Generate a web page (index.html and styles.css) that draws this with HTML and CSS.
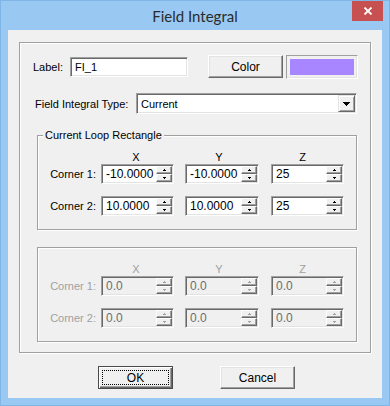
FILE: index.html
```html
<!DOCTYPE html>
<html lang="en">
<head>
  <meta charset="UTF-8">
  <meta name="viewport" content="width=device-width, initial-scale=1.0">
  <title>Field Integral</title>
  <link rel="stylesheet" href="styles.css">
</head>
<body>
  <div class="window">
    <div class="titlebar">
      <span></span>
      <span class="title">Field Integral</span>
      <div class="close">
        <svg width="10" height="8" viewBox="0 0 10 8"><path d="M1.5 0.5 L8.5 7.5 M8.5 0.5 L1.5 7.5" stroke="#fff" stroke-width="1.8" fill="none"/></svg>
      </div>
    </div>

    <div class="client">
      <div class="frame">
        <div class="row row-label">
          <span class="lbl lbl-label">Label:</span>
          <div class="edit edit-label">FI_1</div>
          <div class="button btn-color">Color</div>
          <div class="swatch"><div class="swatch-fill"></div></div>
        </div>

        <div class="row row-type">
          <span class="lbl lbl-type">Field Integral Type:</span>
          <div class="combo">
            <span class="combo-text">Current</span>
            <div class="combo-btn">
              <svg width="7" height="4" viewBox="0 0 7 4"><path d="M0 0h7v1H0zM1 1h5v1H1zM2 2h3v1H2zM3 3h1v1H3z" fill="#000"/></svg>
            </div>
          </div>
        </div>

        <div class="group">
          <span class="group-title">Current Loop Rectangle</span>
          <div class="coords-row hdr-row">
            <span class="corner-lbl"></span>
            <span class="hdr c1">X</span>
            <span class="hdr c2">Y</span>
            <span class="hdr c3">Z</span>
          </div>
          <div class="coords-row">
            <span class="corner-lbl">Corner 1:</span>
            <div class="spin c1"><span class="spin-text">-10.0000</span><span class="spin-btns"><span class="spin-up"><svg width="3" height="2" viewBox="0 0 3 2"><path d="M1 0h1v1H1zM0 1h3v1H0z"/></svg></span><span class="spin-down"><svg width="3" height="2" viewBox="0 0 3 2"><path d="M0 0h3v1H0zM1 1h1v1H1z"/></svg></span></span></div>
            <div class="spin c2"><span class="spin-text">-10.0000</span><span class="spin-btns"><span class="spin-up"><svg width="3" height="2" viewBox="0 0 3 2"><path d="M1 0h1v1H1zM0 1h3v1H0z"/></svg></span><span class="spin-down"><svg width="3" height="2" viewBox="0 0 3 2"><path d="M0 0h3v1H0zM1 1h1v1H1z"/></svg></span></span></div>
            <div class="spin c3"><span class="spin-text">25</span><span class="spin-btns"><span class="spin-up"><svg width="3" height="2" viewBox="0 0 3 2"><path d="M1 0h1v1H1zM0 1h3v1H0z"/></svg></span><span class="spin-down"><svg width="3" height="2" viewBox="0 0 3 2"><path d="M0 0h3v1H0zM1 1h1v1H1z"/></svg></span></span></div>
          </div>
          <div class="coords-row second">
            <span class="corner-lbl">Corner 2:</span>
            <div class="spin c1"><span class="spin-text">10.0000</span><span class="spin-btns"><span class="spin-up"><svg width="3" height="2" viewBox="0 0 3 2"><path d="M1 0h1v1H1zM0 1h3v1H0z"/></svg></span><span class="spin-down"><svg width="3" height="2" viewBox="0 0 3 2"><path d="M0 0h3v1H0zM1 1h1v1H1z"/></svg></span></span></div>
            <div class="spin c2"><span class="spin-text">10.0000</span><span class="spin-btns"><span class="spin-up"><svg width="3" height="2" viewBox="0 0 3 2"><path d="M1 0h1v1H1zM0 1h3v1H0z"/></svg></span><span class="spin-down"><svg width="3" height="2" viewBox="0 0 3 2"><path d="M0 0h3v1H0zM1 1h1v1H1z"/></svg></span></span></div>
            <div class="spin c3"><span class="spin-text">25</span><span class="spin-btns"><span class="spin-up"><svg width="3" height="2" viewBox="0 0 3 2"><path d="M1 0h1v1H1zM0 1h3v1H0z"/></svg></span><span class="spin-down"><svg width="3" height="2" viewBox="0 0 3 2"><path d="M0 0h3v1H0zM1 1h1v1H1z"/></svg></span></span></div>
          </div>
        </div>

        <div class="group disabled">
          <div class="coords-row hdr-row">
            <span class="corner-lbl"></span>
            <span class="hdr c1">X</span>
            <span class="hdr c2">Y</span>
            <span class="hdr c3">Z</span>
          </div>
          <div class="coords-row">
            <span class="corner-lbl">Corner 1:</span>
            <div class="spin c1"><span class="spin-text">0.0</span><span class="spin-btns"><span class="spin-up"><svg width="3" height="2" viewBox="0 0 3 2"><path d="M1 0h1v1H1zM0 1h3v1H0z"/></svg></span><span class="spin-down"><svg width="3" height="2" viewBox="0 0 3 2"><path d="M0 0h3v1H0zM1 1h1v1H1z"/></svg></span></span></div>
            <div class="spin c2"><span class="spin-text">0.0</span><span class="spin-btns"><span class="spin-up"><svg width="3" height="2" viewBox="0 0 3 2"><path d="M1 0h1v1H1zM0 1h3v1H0z"/></svg></span><span class="spin-down"><svg width="3" height="2" viewBox="0 0 3 2"><path d="M0 0h3v1H0zM1 1h1v1H1z"/></svg></span></span></div>
            <div class="spin c3"><span class="spin-text">0.0</span><span class="spin-btns"><span class="spin-up"><svg width="3" height="2" viewBox="0 0 3 2"><path d="M1 0h1v1H1zM0 1h3v1H0z"/></svg></span><span class="spin-down"><svg width="3" height="2" viewBox="0 0 3 2"><path d="M0 0h3v1H0zM1 1h1v1H1z"/></svg></span></span></div>
          </div>
          <div class="coords-row second">
            <span class="corner-lbl">Corner 2:</span>
            <div class="spin c1"><span class="spin-text">0.0</span><span class="spin-btns"><span class="spin-up"><svg width="3" height="2" viewBox="0 0 3 2"><path d="M1 0h1v1H1zM0 1h3v1H0z"/></svg></span><span class="spin-down"><svg width="3" height="2" viewBox="0 0 3 2"><path d="M0 0h3v1H0zM1 1h1v1H1z"/></svg></span></span></div>
            <div class="spin c2"><span class="spin-text">0.0</span><span class="spin-btns"><span class="spin-up"><svg width="3" height="2" viewBox="0 0 3 2"><path d="M1 0h1v1H1zM0 1h3v1H0z"/></svg></span><span class="spin-down"><svg width="3" height="2" viewBox="0 0 3 2"><path d="M0 0h3v1H0zM1 1h1v1H1z"/></svg></span></span></div>
            <div class="spin c3"><span class="spin-text">0.0</span><span class="spin-btns"><span class="spin-up"><svg width="3" height="2" viewBox="0 0 3 2"><path d="M1 0h1v1H1zM0 1h3v1H0z"/></svg></span><span class="spin-down"><svg width="3" height="2" viewBox="0 0 3 2"><path d="M0 0h3v1H0zM1 1h1v1H1z"/></svg></span></span></div>
          </div>
        </div>
      </div>

      <div class="buttons">
        <div class="button btn-ok">OK</div>
        <div class="button btn-cancel">Cancel</div>
      </div>
    </div>
  </div>
</body>
</html>
```

FILE: styles.css
```css
body {
  margin: 0;
  font-family: "Liberation Sans", Arial, sans-serif;
  font-size: 11px;
  color: #000;
}
.window {
  width: 390px;
  height: 406px;
  box-sizing: border-box;
  background-color: #99c9f3;
  border: 1px solid #80b5e6;
  padding: 0 7px 7px;
  display: flex;
  flex-direction: column;
}
.titlebar {
  height: 29px;
  margin: 0 -7px;
  display: grid;
  grid-template-columns: 1fr auto 1fr;
  align-items: center;
}
.title {
  font-family: Lato, "Noto Sans", sans-serif;
  font-size: 15px;
  line-height: 18px;
  color: #2b2b2b;
  padding-top: 1px;
}
.close {
  justify-self: end;
  align-self: start;
  margin-right: 6px;
  width: 31px;
  height: 20px;
  background-color: #c75050;
  display: flex;
  align-items: center;
  justify-content: center;
}
.client {
  height: 368px;
  background-color: #f0f0f0;
  display: flex;
  flex-direction: column;
}

/* etched outer frame */
.frame {
  margin: 12px 0 0 11px;
  width: 352px;
  height: 311px;
  box-sizing: border-box;
  border: 1px solid #a0a0a0;
  box-shadow: 1px 1px 0 #fff, inset 1px 1px 0 #fff;
}
.row {
  display: flex;
  align-items: center;
}
.row-label {
  margin-top: 12px;
  padding-left: 13px;
  height: 24px;
}
.row-type {
  margin-top: 14px;
  padding-left: 15px;
  height: 21px;
}
.lbl-label {
  width: 37px;
}
.lbl-type {
  width: 101px;
}

/* sunken controls */
.edit,
.combo,
.spin {
  box-sizing: border-box;
  border: 1px solid;
  border-color: #a0a0a0 #fff #fff #a0a0a0;
  box-shadow: inset 1px 1px 0 #696969, inset -1px -1px 0 #e3e3e3;
  background-color: #fff;
  display: flex;
  align-items: center;
}
.edit-label {
  width: 118px;
  height: 20px;
  padding-left: 4px;
}
.combo {
  width: 221px;
  height: 21px;
  padding: 1px 1px 1px 4px;
}
.combo-text {
  flex: 1;
}
.combo-btn {
  width: 17px;
  height: 17px;
  box-sizing: border-box;
  border: 1px solid;
  border-color: #e3e3e3 #696969 #696969 #e3e3e3;
  box-shadow: inset 1px 1px 0 #fff, inset -1px -1px 0 #a0a0a0;
  background-color: #f0f0f0;
  display: flex;
  align-items: center;
  justify-content: center;
}

/* raised push buttons */
.button {
  box-sizing: border-box;
  border: 1px solid;
  border-color: #fff #696969 #696969 #fff;
  box-shadow: inset -1px -1px 0 #a0a0a0, inset 1px 1px 0 #e3e3e3;
  background-color: #f0f0f0;
  display: flex;
  align-items: center;
  justify-content: center;
}
.btn-color {
  align-self: flex-start;
  margin-left: 20px;
  width: 75px;
  height: 23px;
  font-size: 12px;
}
.swatch {
  margin-left: 3px;
  width: 72px;
  height: 24px;
  box-sizing: border-box;
  border: 1px solid;
  border-color: #a0a0a0 #fff #fff #a0a0a0;
  box-shadow: inset -1px -1px 0 #e3e3e3;
  padding: 3px;
}
.swatch-fill {
  height: 100%;
  background-color: #a886ff;
}

/* group boxes */
.group {
  position: relative;
  margin: 21px 0 0 17px;
  width: 320px;
  height: 95px;
  box-sizing: border-box;
  border: 1px solid #a0a0a0;
  box-shadow: 1px 1px 0 #fff, inset 1px 1px 0 #fff;
  padding-top: 15px;
}
.group + .group {
  margin-top: 17px;
}
.group-title {
  position: absolute;
  top: -7px;
  left: 5px;
  padding: 0 2px;
  line-height: 13px;
  background-color: #f0f0f0;
}
.coords-row {
  display: flex;
  align-items: center;
  height: 20px;
}
.hdr-row {
  height: 13px;
  line-height: 13px;
}
.coords-row.second {
  margin-top: 12px;
}
.corner-lbl {
  width: 58px;
  padding-right: 5px;
  text-align: right;
}
.c1 {
  width: 73px;
}
.c2 {
  width: 74px;
  margin-left: 11px;
}
.c3 {
  width: 73px;
  margin-left: 12px;
}
.hdr {
  box-sizing: border-box;
  text-align: center;
}
.hdr.c1 {
  padding-right: 3px;
}
.hdr.c2 {
  padding-right: 6px;
}
.hdr.c3 {
  padding-right: 10px;
}
.spin {
  height: 20px;
  padding: 1px 1px 1px 4px;
}
.spin-text {
  flex: 1;
  font-size: 12px;
}
.spin-btns {
  width: 16px;
  height: 16px;
  display: flex;
  flex-direction: column;
}
.spin-up,
.spin-down {
  height: 8px;
  box-sizing: border-box;
  border: 1px solid;
  border-color: #fff #696969 #696969 #fff;
  box-shadow: inset -1px -1px 0 #a0a0a0;
  background-color: #f0f0f0;
  display: flex;
  align-items: center;
  justify-content: center;
  fill: #000;
}
.disabled {
  color: #a0a0a0;
}
.disabled .spin {
  background-color: #f0f0f0;
}
.disabled .spin-text {
  color: #6d6d6d;
}
.disabled .spin-up,
.disabled .spin-down {
  fill: #a0a0a0;
}

/* dialog buttons */
.buttons {
  margin-top: 13px;
  padding-left: 90px;
  display: flex;
  gap: 47px;
}
.btn-ok,
.btn-cancel {
  width: 75px;
  height: 23px;
  font-size: 12px;
}
.btn-ok {
  border-color: #4a4a4a;
  box-shadow: inset 1px 1px 0 #fff, inset -1px -1px 0 #696969, inset -2px -2px 0 #a0a0a0;
  outline: 1px dotted #000;
  outline-offset: -5px;
}
```
